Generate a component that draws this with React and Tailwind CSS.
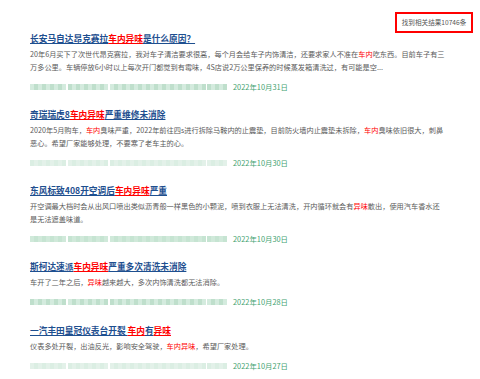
import React from 'react';

const shades = [
    'bg-[#d4ebde]',
    'bg-[#c6e4d2]',
    'bg-[#e3f1e9]',
    'bg-[#bfdfcc]',
    'bg-[#d0e9da]',
    'bg-[#dbeee3]',
];

const results = [
    {
        title: [['长安马自达昂克赛拉'], ['车内异味', true], ['是什么原因？']],
        lines: [
            [['20年6月买下了次世代昂克赛拉，我对车子清洁要求很高，每个月会给车子内饰清洁，还要求家人不准在'], ['车内', true], ['吃东西。目前车子有三']],
            [['万多公里。车辆停放6小时以上每次开门都觉到有霉味，4S店说2万公里保养的时候蒸发箱清洗过，有可能是空...']],
        ],
        date: '2022年10月31日',
    },
    {
        title: [['奇瑞瑞虎8'], ['车内异味', true], ['严重维修未消除']],
        lines: [
            [['2020年5月购车，'], ['车内', true], ['臭味严重，2022年前往四s进行拆除马鞍内的止震垫，目前防火墙内止震垫未拆除，'], ['车内', true], ['臭味依旧很大，刺鼻']],
            [['恶心。希望厂家能够处理，不要寒了老车主的心。']],
        ],
        date: '2022年10月30日',
    },
    {
        title: [['东风标致408开空调后'], ['车内异味', true], ['严重']],
        lines: [
            [['开空调最大档时会从出风口喷出类似沥青般一样黑色的小颗泥，喷到衣服上无法清洗，开内循环就会有'], ['异味', true], ['散出，使用汽车香水还']],
            [['是无法遮盖味道。']],
        ],
        date: '2022年10月30日',
    },
    {
        title: [['斯柯达速派'], ['车内异味', true], ['严重多次清洗未消除']],
        lines: [
            [['车开了二年之后，'], ['异味', true], ['越来越大，多次内饰清洗都无法消除。']],
        ],
        date: '2022年10月28日',
    },
    {
        title: [['一汽丰田皇冠仪表台开裂 '], ['车内', true], ['有'], ['异味', true]],
        lines: [
            [['仪表多处开裂，出油反光，影响安全驾驶，'], ['车内异味', true], ['，希望厂家处理。']],
        ],
        date: '2022年10月27日',
    },
];

const segments = [34, 38, 93, 18];

function BlurredLink({ seed }) {
    return (
        <div className="flex gap-[4px] h-[6px] blur-[0.4px]">
            {segments.map((w, s) => (
                <div key={s} className="flex h-full" style={{ width: w }}>
                    {Array.from({ length: Math.ceil(w / 4) }).map((_, i) => (
                        <div key={i} className={`h-full w-[4px] shrink-0 ${shades[(i * 7 + s * 3 + seed * 5 + (i % 3) * 2) % shades.length]}`} />
                    ))}
                </div>
            ))}
        </div>
    );
}

function Result({ item, index }) {
    return (
        <div className="pb-[12.5px]">
            <a className="block leading-[18px] text-[8.7px] font-bold whitespace-nowrap">
                {item.title.map(([text, hot], i) => (
                    <span key={i} className={hot ? 'text-[#f00] underline' : 'text-[#1e4f8f] underline'}>
                        {text}
                    </span>
                ))}
            </a>
            <div className="text-[7.2px] leading-[12.5px] text-[#5a5a5a]">
                {item.lines.map((line, i) => (
                    <div key={i} className="whitespace-nowrap">
                        {line.map(([text, hot], j) => (
                            <span key={j} className={hot ? 'text-[#f00]' : ''}>{text}</span>
                        ))}
                    </div>
                ))}
            </div>
            <div className="mt-[6.5px] h-[14px] flex items-center">
                <BlurredLink seed={index} />
                <span className="ml-[8px] text-[7.4px] text-[#44a372]">{item.date}</span>
            </div>
        </div>
    );
}

export default function App() {
    return (
        <div className="w-[480px] h-[379px] overflow-hidden bg-white pt-[12px] pl-[30px] pr-[7px]" style={{ fontFamily: '"Noto Sans CJK SC", "Noto Sans", sans-serif' }}>
            <div className="flex justify-end">
                <div className="h-[21px] w-[78px] border-2 border-[#f00] flex items-center justify-center text-[6.6px] text-[#555] whitespace-nowrap overflow-hidden">
                    找到相关结果10746条
                </div>
            </div>
            <div className="mt-[-3px]">
                {results.map((item, i) => (
                    <Result key={i} item={item} index={i} />
                ))}
            </div>
        </div>
    );
}
